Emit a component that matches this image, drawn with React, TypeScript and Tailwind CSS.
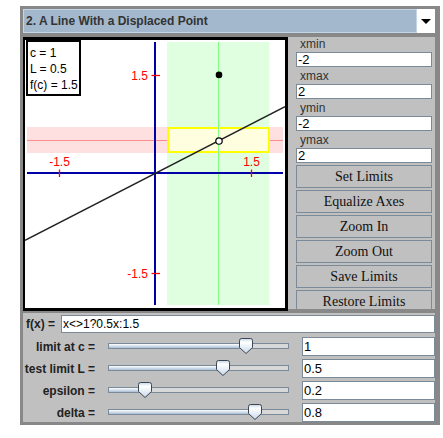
import React from "react";

// Limit applet: "A Line With a Displaced Point". Plot is 260x268 inside the
// black frame; world -2..2 on both axes.

const SANS = "font-['Liberation_Sans',Arial,sans-serif]";
const SERIF = "font-['Liberation_Serif','Times_New_Roman',serif]";

const X = (x: number) => 130 + 64 * x;
const Y = (y: number) => 133.5 - 65.75 * y;

const SLIDERS = [
  { label: "limit at c =", value: "1", frac: 0.75 },
  { label: "test limit L =", value: "0.5", frac: 0.625 },
  { label: "epsilon =", value: "0.2", frac: 0.2 },
  { label: "delta =", value: "0.8", frac: 0.8 },
];

const LIMITS = [
  { label: "xmin", value: "-2" },
  { label: "xmax", value: "2" },
  { label: "ymin", value: "-2" },
  { label: "ymax", value: "2" },
];

const BUTTONS = [
  "Set Limits",
  "Equalize Axes",
  "Zoom In",
  "Zoom Out",
  "Save Limits",
  "Restore Limits",
];

function Plot() {
  return (
    <svg width={260} height={268} className="block">
      {/* delta band */}
      <rect x={142} y={2} width={102.3} height={263} fill="#e0ffe0" />
      {/* epsilon band */}
      <rect x={2} y={87} width={256} height={26} fill="#ffe0e0" />
      <line x1={2} x2={258} y1={100.5} y2={100.5} stroke="#ff8c8c" />
      <rect
        x={143}
        y={88}
        width={101}
        height={24}
        fill="#ffffe0"
        stroke="#ffff00"
        strokeWidth={2}
      />
      <line x1={193.5} x2={193.5} y1={2} y2={265} stroke="#80ff80" />

      {/* axes */}
      <line x1={2} x2={258} y1={133} y2={133} stroke="#0000a8" strokeWidth={2} />
      <line x1={130} x2={130} y1={2} y2={265} stroke="#0000a8" strokeWidth={2} />

      {/* ticks */}
      <g stroke="#ff0000" strokeWidth={1.3}>
        <line x1={34.5} x2={34.5} y1={129.5} y2={137} />
        <line x1={226.5} x2={226.5} y1={129.5} y2={137} />
        <line x1={126.5} x2={135} y1={35.5} y2={35.5} />
        <line x1={126.5} x2={135} y1={233.5} y2={233.5} />
      </g>
      <g
        fill="#ff0000"
        fontSize={12}
        fontFamily="'Liberation Sans', Arial, sans-serif"
      >
        <text x={34.5} y={126} textAnchor="middle">-1.5</text>
        <text x={226.5} y={126} textAnchor="middle">1.5</text>
        <text x={123} y={40} textAnchor="end">1.5</text>
        <text x={123} y={238} textAnchor="end">-1.5</text>
      </g>

      {/* f(x) = 0.5x */}
      <line
        x1={0}
        y1={Y(-130 / 64 / 2)}
        x2={260}
        y2={Y(130 / 64 / 2)}
        stroke="#222"
        strokeWidth={1.4}
      />
      <circle cx={X(1)} cy={Y(0.5) + 0.4} r={3.2} fill="#fff" stroke="#000" strokeWidth={1.2} />
      <circle cx={X(1)} cy={Y(1.5)} r={3.3} fill="#000" />
    </svg>
  );
}

function Thumb() {
  return (
    <svg width={14} height={16}>
      <defs>
        <linearGradient id="thumbFill" x1="0" y1="0" x2="0" y2="1">
          <stop offset="0" stopColor="#c3d4e6" />
          <stop offset="0.25" stopColor="#ffffff" />
          <stop offset="1" stopColor="#c8d8ea" />
        </linearGradient>
      </defs>
      <path
        d="M0.5 2.5 Q0.5 0.5 2.5 0.5 H11.5 Q13.5 0.5 13.5 2.5 V9.5 L7 15.5 L0.5 9.5 Z"
        fill="url(#thumbFill)"
        stroke="#3c4650"
      />
    </svg>
  );
}

function Slider({ frac }: { frac: number }) {
  const pos = 1 + frac * 182;
  return (
    <div className="relative ml-[11px] h-full w-[181px] pt-[6px]">
      <div className="h-[6px] border border-[#7a8a99] bg-[#d8d8d8]">
        <div
          className="h-full bg-gradient-to-b from-white to-[#a9bfd6]"
          style={{ width: pos }}
        />
      </div>
      <div className="absolute top-[1px]" style={{ left: pos - 7 }}>
        <Thumb />
      </div>
    </div>
  );
}

export default function App() {
  return (
    <div className={`h-[438px] w-[443px] bg-white pl-[20px] pt-[6px] ${SANS}`}>
      <div className="flex w-[420px] flex-col bg-[#888888] pb-[3px] pl-[3px] pr-[5px] pt-[3px]">
        {/* title combo */}
        <div className="flex h-[24px]">
          <div className="flex flex-1 items-center border border-[#c4d5e6] bg-[#a3b8cc] pl-[2px] text-[12px] font-bold text-[#333]">
            2. A Line With a Displaced Point
          </div>
          <div className="flex w-[18px] items-center justify-center bg-white">
            <svg width={10} height={5}>
              <path d="M0 0 H10 L5 5 Z" fill="#000" />
            </svg>
          </div>
        </div>

        <div className="mt-[4px] flex items-start">
          {/* graph */}
          <div className="relative h-[274px] w-[265px] border-[3px] border-l-2 border-black bg-white">
            <Plot />
            <div className="absolute left-[1px] top-0 h-[56px] w-[55px] border-2 border-black bg-white pl-[2px] pt-[3px] text-[12px] leading-[16px] text-black">
              <div>c = 1</div>
              <div>L = 0.5</div>
              <div>f(c) = 1.5</div>
            </div>
          </div>

          {/* limits panel */}
          <div className="flex h-[272px] flex-1 flex-col overflow-hidden bg-[#c0c0c0] pl-[8px] pr-[3px]">
            {LIMITS.map((l, i) => (
              <div key={l.label} className="flex flex-col">
                <div
                  className={`pl-[4px] text-[12px] text-[#333] ${i === 0 ? "h-[15px] leading-[15px]" : "h-[17px] leading-[18px]"}`}
                >
                  {l.label}
                </div>
                <div className="flex h-[15px] items-center border border-[#7a8a99] bg-white pl-[1px] text-[13px] text-black">
                  {l.value}
                </div>
              </div>
            ))}
            <div className="mt-[2px] flex flex-col gap-[2px]">
              {BUTTONS.map((b) => (
                <button
                  key={b}
                  className={`h-[23px] shrink-0 border border-[#7a8a99] bg-[#c0c0c0] text-[14px] text-[#111] ${SERIF}`}
                >
                  {b}
                </button>
              ))}
            </div>
          </div>
        </div>

        {/* function and sliders */}
        <div className="mt-[2px] flex flex-col bg-[#c0c0c0] pt-[2px]">
          <div className="flex h-[18px] items-center">
            <div className="w-[38px] pl-[3px] text-[12px] font-bold text-[#222]">f(x) =</div>
            <div className="flex h-full flex-1 items-center border border-[#7a8a99] bg-white pl-[1px] text-[12px] text-black">
              {"x<>1?0.5x:1.5"}
            </div>
          </div>
          <div className="mt-[4px] flex flex-col gap-[3px]">
            {SLIDERS.map((s) => (
              <div key={s.label} className="flex h-[19px] items-center">
                <div className="w-[74px] pr-[2px] text-right text-[12px] font-bold text-[#222]">
                  {s.label}
                </div>
                <Slider frac={s.frac} />
                <div className="ml-auto flex h-full w-[133px] items-center border border-[#7a8a99] bg-white pl-[1px] text-[13px] text-black">
                  {s.value}
                </div>
              </div>
            ))}
          </div>
        </div>
      </div>
    </div>
  );
}
